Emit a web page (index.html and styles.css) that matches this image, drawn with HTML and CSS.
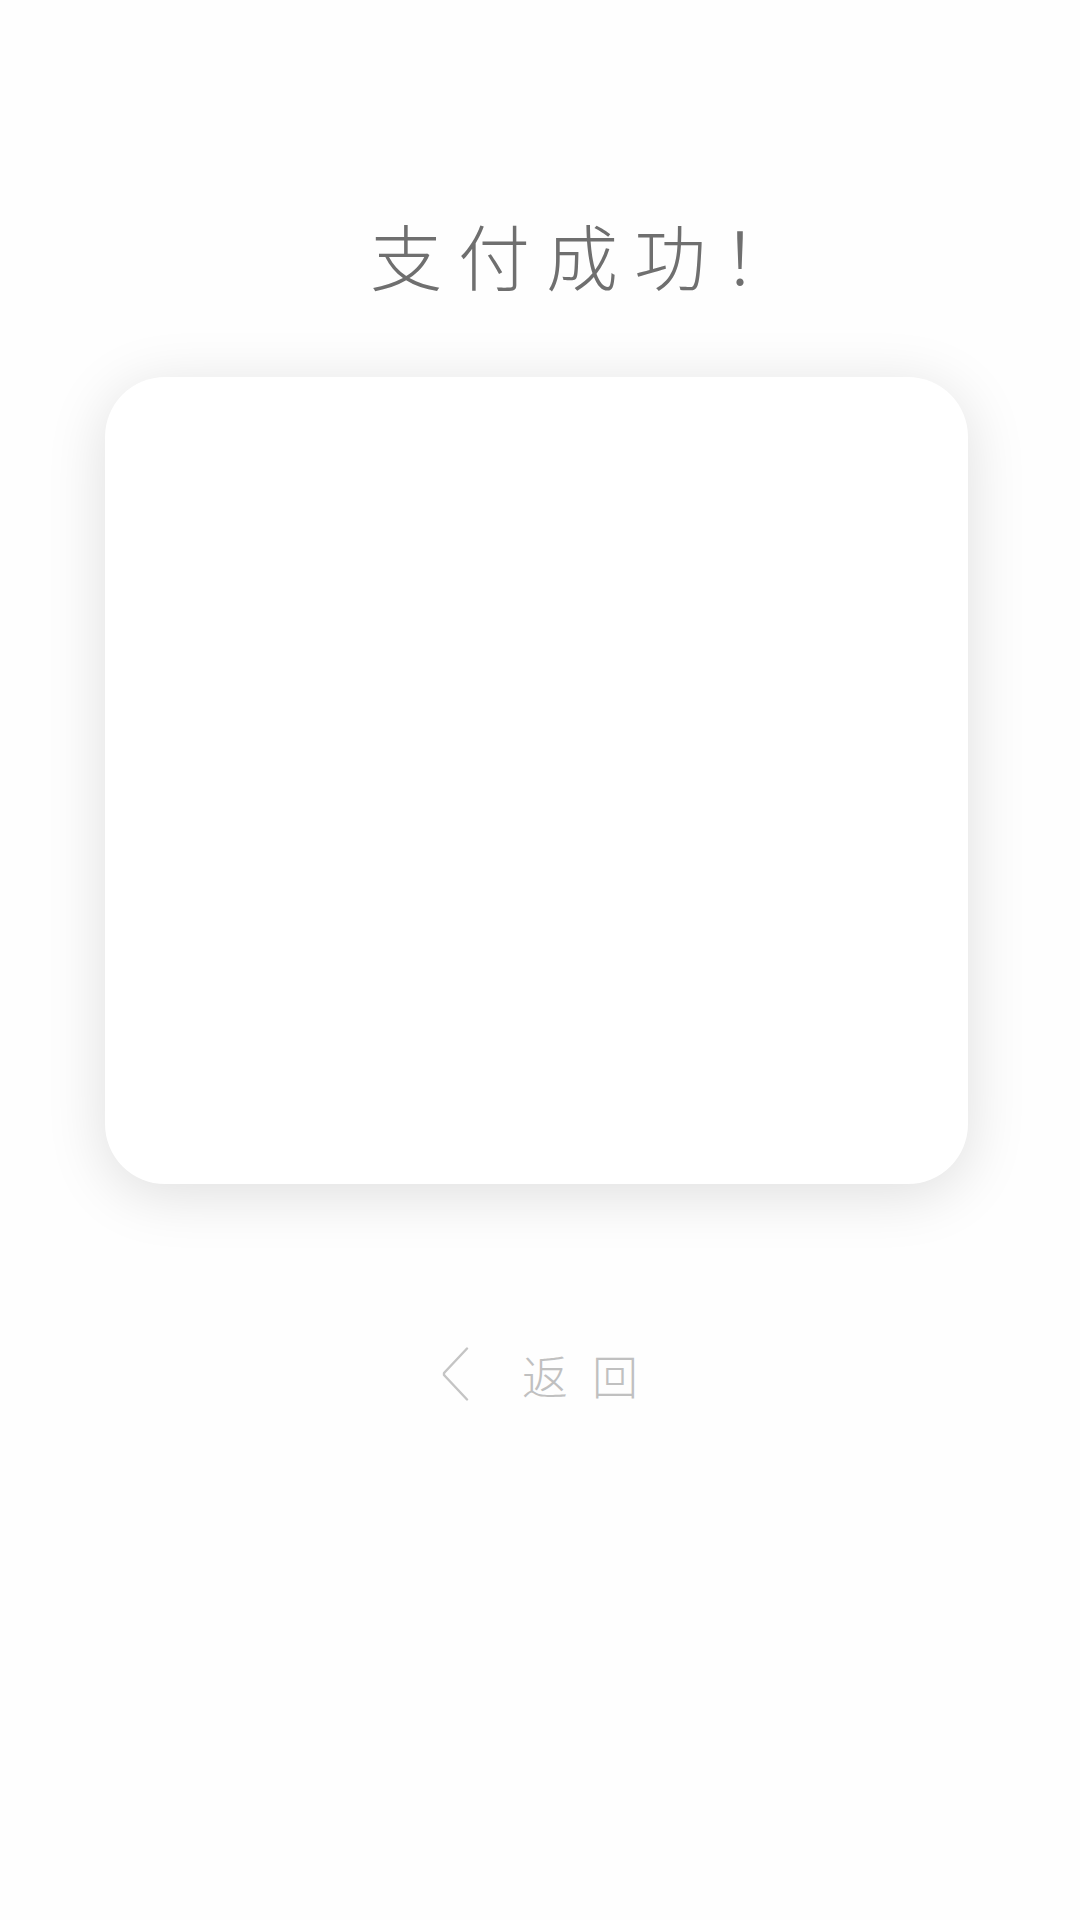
FILE: index.html
```html
<!DOCTYPE html>
<html lang="zh">
<head>
<meta charset="utf-8">
<title>支付成功</title>
<link rel="stylesheet" href="styles.css">
</head>
<body>
<main class="page">
  <h1 class="title">支付成功！</h1>
  <section class="card"></section>
  <a class="back" href="#">
    <svg class="chevron" width="28" height="54" viewBox="0 0 28 54">
      <polyline points="25,1.5 2,26 2,28 25,52.5" fill="none" stroke="#c4c4c4" stroke-width="2.4" stroke-linecap="round" stroke-linejoin="round"/>
    </svg>
    <span class="back-text">返回</span>
  </a>
</main>
</body>
</html>
```
FILE: styles.css
```css
html, body {
  margin: 0;
  padding: 0;
  background: #fefefe;
}
body {
  width: 1080px;
  height: 1920px;
  font-family: "Noto Sans CJK SC", "Noto Sans", sans-serif;
}
.page {
  display: flex;
  flex-direction: column;
  align-items: center;
}
.title {
  margin: 214px 0 0 0;
  font-size: 72px;
  font-weight: 300;
  line-height: 80px;
  letter-spacing: 16px;
  color: #6f6f6f;
  padding-left: 100px;
}
.card {
  margin: 83px 7px 0 0;
  width: 863px;
  height: 807px;
  border-radius: 60px;
  background: #ffffff;
  box-shadow: 0 10px 60px rgba(0, 0, 0, 0.13);
}
.back {
  margin-top: 160px;
  padding-left: 24px;
  display: flex;
  align-items: center;
  gap: 52px;
  text-decoration: none;
  color: #c0c0c0;
}
.chevron {
  display: block;
}
.back-text {
  font-size: 46px;
  line-height: 60px;
  letter-spacing: 24px;
  font-weight: 300;
}
```
